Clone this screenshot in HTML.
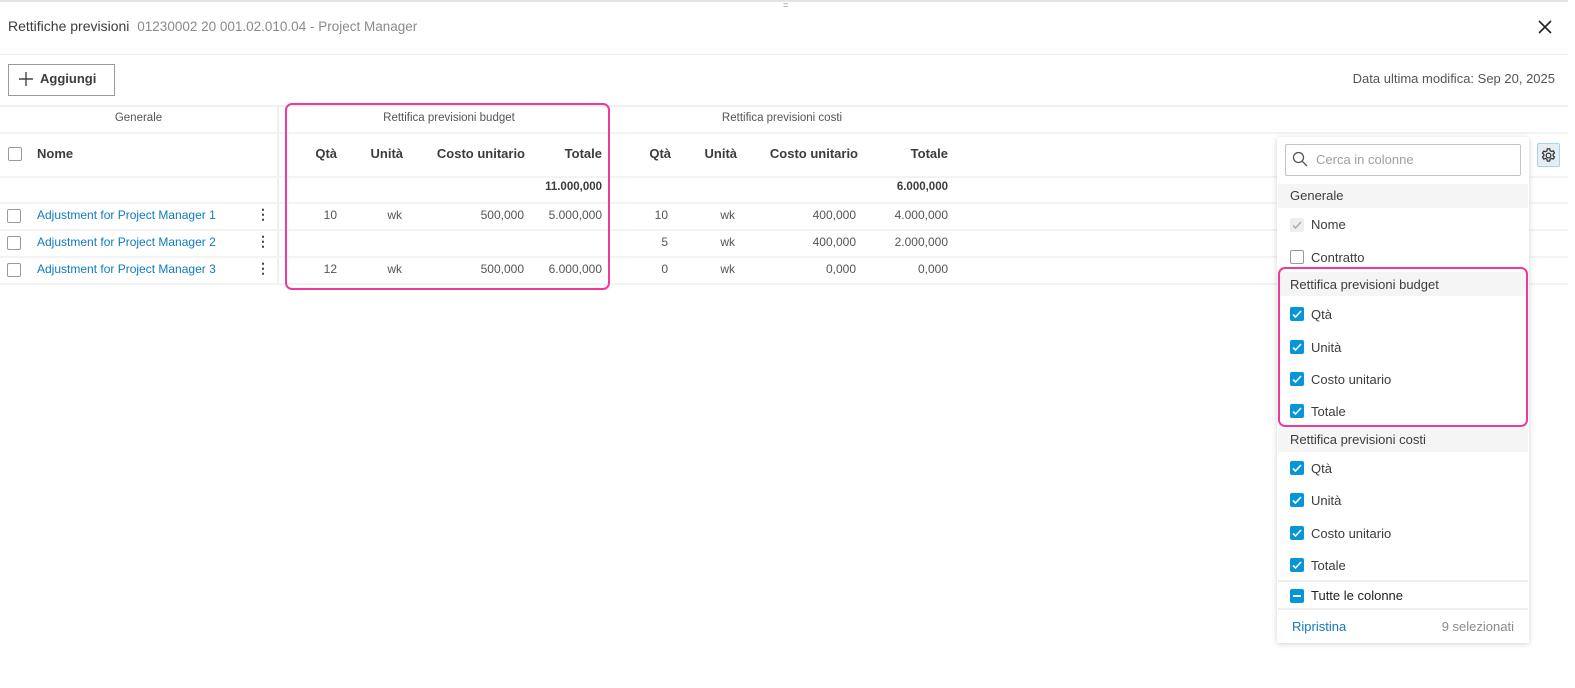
<!DOCTYPE html>
<html><head><meta charset="utf-8"><style>
*{box-sizing:border-box;margin:0;padding:0}
body{width:1575px;height:688px;background:#fff;font-family:"Liberation Sans",sans-serif;color:#3c3c3c;position:relative;overflow:hidden}
.a{position:absolute;white-space:nowrap}
.hl{position:absolute;left:0;width:1568px;height:1px;background:#eeeeee}
.r{text-align:right}
.cb{position:absolute;width:14px;height:14px;border:1px solid #9a9a9a;border-radius:2px;background:#fff}
.bc{position:absolute;width:14px;height:14px;border-radius:2px;background:#0696d7}
.bc svg{position:absolute;left:0;top:0}
.lnk{color:#0f7ac0;font-size:12px}
.num{font-size:12px;color:#555}
.hd{font-size:13px;font-weight:bold;color:#3c3c3c}
.gh{font-size:11.5px;color:#555}
.pi{font-size:13px;color:#3c3c3c}
</style></head><body>
<div class="a" style="left:0;top:0;width:1568px;height:2px;background:#e4e4e4"></div>
<div class="a" style="left:783px;top:0;font-size:9px;color:#888">=</div>
<div class="a" style="left:8px;top:18px;font-size:14px;color:#3c3c3c">Rettifiche previsioni <span style="color:#8a8a8a;margin-left:4px;font-size:13.5px">01230002 20 001.02.010.04 - Project Manager</span></div>
<svg class="a" style="left:1538px;top:20px" width="14" height="14" viewBox="0 0 14 14"><path d="M1 1L13 13M13 1L1 13" stroke="#222" stroke-width="1.6"/></svg>
<div class="hl" style="top:54px"></div>
<div class="a" style="left:8px;top:64px;width:107px;height:32px;border:1px solid #9a9a9a;background:#fff"></div>
<svg class="a" style="left:18px;top:71px" width="16" height="16" viewBox="0 0 16 16"><path d="M8 1V15M1 8H15" stroke="#444" stroke-width="1.4"/></svg>
<div class="a" style="left:40px;top:71px;font-size:13px;font-weight:bold;color:#3c3c3c">Aggiungi</div>
<div class="a r" style="right:20px;top:71px;font-size:13px;color:#555">Data ultima modifica: Sep 20, 2025</div>
<div class="hl" style="top:105px;height:2px;background:#f0f0f0"></div>
<div class="a" style="left:277px;top:105px;width:2px;height:180px;background:#efefef"></div>
<div class="a gh" style="left:0;width:277px;text-align:center;top:112px">Generale</div>
<div class="a gh" style="left:279px;width:340px;text-align:center;top:112px">Rettifica previsioni budget</div>
<div class="a gh" style="left:612px;width:340px;text-align:center;top:112px">Rettifica previsioni costi</div>
<div class="hl" style="top:132px;height:2px;background:#f3f3f3"></div>
<div class="cb" style="left:8px;top:147px"></div>
<div class="a hd" style="left:37px;top:146px">Nome</div>
<div class="a hd r" style="right:1238px;top:146px">Qtà</div>
<div class="a hd r" style="right:1172px;top:146px">Unità</div>
<div class="a hd r" style="right:1050px;top:146px">Costo unitario</div>
<div class="a hd r" style="right:973px;top:146px">Totale</div>
<div class="a hd r" style="right:904px;top:146px">Qtà</div>
<div class="a hd r" style="right:838px;top:146px">Unità</div>
<div class="a hd r" style="right:717px;top:146px">Costo unitario</div>
<div class="a hd r" style="right:627px;top:146px">Totale</div>
<div class="hl" style="top:176px;height:2px;background:#f3f3f3"></div>
<div class="a r" style="right:973px;top:181px;font-size:11.5px;font-weight:bold;color:#3c3c3c">11.000,000</div>
<div class="a r" style="right:627px;top:181px;font-size:11.5px;font-weight:bold;color:#3c3c3c">6.000,000</div>
<div class="hl" style="top:202px;height:2px;background:#f3f3f3"></div>
<div class="hl" style="top:229px;height:2px;background:#f3f3f3"></div>
<div class="hl" style="top:256px;height:2px;background:#f3f3f3"></div>
<div class="hl" style="top:283px;height:2px;background:#f3f3f3"></div>

<!-- row1 -->
<div class="cb" style="left:7px;top:209px"></div>
<div class="a lnk" style="left:37px;top:208px">Adjustment for Project Manager 1</div>
<div class="a" style="left:256px;top:207px;font-size:14px;font-weight:bold;color:#444;line-height:14px">⋮</div>
<div class="a num r" style="right:1238px;top:208px">10</div>
<div class="a num r" style="right:1173px;top:208px">wk</div>
<div class="a num r" style="right:1051px;top:208px">500,000</div>
<div class="a num r" style="right:973px;top:208px">5.000,000</div>
<div class="a num r" style="right:907px;top:208px">10</div>
<div class="a num r" style="right:840px;top:208px">wk</div>
<div class="a num r" style="right:719px;top:208px">400,000</div>
<div class="a num r" style="right:627px;top:208px">4.000,000</div>
<!-- row2 -->
<div class="cb" style="left:7px;top:236px"></div>
<div class="a lnk" style="left:37px;top:235px">Adjustment for Project Manager 2</div>
<div class="a" style="left:256px;top:234px;font-size:14px;font-weight:bold;color:#444;line-height:14px">⋮</div>
<div class="a num r" style="right:907px;top:235px">5</div>
<div class="a num r" style="right:840px;top:235px">wk</div>
<div class="a num r" style="right:719px;top:235px">400,000</div>
<div class="a num r" style="right:627px;top:235px">2.000,000</div>
<!-- row3 -->
<div class="cb" style="left:7px;top:263px"></div>
<div class="a lnk" style="left:37px;top:262px">Adjustment for Project Manager 3</div>
<div class="a" style="left:256px;top:261px;font-size:14px;font-weight:bold;color:#444;line-height:14px">⋮</div>
<div class="a num r" style="right:1238px;top:262px">12</div>
<div class="a num r" style="right:1173px;top:262px">wk</div>
<div class="a num r" style="right:1051px;top:262px">500,000</div>
<div class="a num r" style="right:973px;top:262px">6.000,000</div>
<div class="a num r" style="right:907px;top:262px">0</div>
<div class="a num r" style="right:840px;top:262px">wk</div>
<div class="a num r" style="right:719px;top:262px">0,000</div>
<div class="a num r" style="right:627px;top:262px">0,000</div>

<div class="a" style="left:285px;top:103px;width:325px;height:187px;border:2px solid #f0399a;border-radius:7px"></div>

<!-- gear -->
<div class="a" style="left:1537px;top:143px;width:23px;height:24px;background:#e6eef4;border:1px solid #a9d3ee;border-radius:2px"></div>
<svg class="a" style="left:1540px;top:147px" width="17" height="17" viewBox="0 0 24 24"><path d="M10 2h4l.6 2.8 2 1 2.6-1.3 2.8 2.8-1.3 2.6 1 2 2.8.6v4l-2.8.6-1 2 1.3 2.6-2.8 2.8-2.6-1.3-2 1L14 22h-4l-.6-2.8-2-1-2.6 1.3L2 16.7l1.3-2.6-1-2L-.5 11.5v0L2.3 11 2 10l-.3-.1.6-2.8 1-2L2 2.5" fill="none" stroke="none"/><circle cx="12" cy="12" r="3.3" fill="none" stroke="#333" stroke-width="1.8"/><path d="M10.3 2.5h3.4l.5 2.6 2.1 1.2 2.5-.9 1.7 2.9-2 1.7v2.4l2 1.7-1.7 2.9-2.5-.9-2.1 1.2-.5 2.6h-3.4l-.5-2.6-2.1-1.2-2.5.9-1.7-2.9 2-1.7V10.4l-2-1.7 1.7-2.9 2.5.9 2.1-1.2z" fill="none" stroke="#333" stroke-width="1.8" stroke-linejoin="round"/></svg>

<!-- panel -->
<div class="a" style="left:1277px;top:137px;width:252px;height:506px;background:#fff;box-shadow:0 1px 6px rgba(0,0,0,.18);border-radius:2px"></div>
<div class="a" style="left:1285px;top:144px;width:236px;height:32px;border:1px solid #c4c4c4;border-radius:2px"></div>
<svg class="a" style="left:1292px;top:151px" width="16" height="16" viewBox="0 0 16 16"><circle cx="6.5" cy="6.5" r="5" fill="none" stroke="#555" stroke-width="1.3"/><path d="M10.2 10.2L15 15" stroke="#555" stroke-width="1.3"/></svg>
<div class="a" style="left:1316px;top:152px;font-size:13px;color:#a0a0a0">Cerca in colonne</div>
<div class="a" style="left:1278px;top:184px;width:250px;height:24px;background:#f5f5f5"></div>
<div class="a pi" style="left:1290px;top:188px">Generale</div>
<div class="a" style="left:1290px;top:218px;width:14px;height:14px;background:#eee;border-radius:2px"></div>
<svg class="a" style="left:1290px;top:218px" width="14" height="14" viewBox="0 0 14 14"><path d="M3 7.5l2.5 2.5 5.5-6" fill="none" stroke="#a8a8a8" stroke-width="1.3"/></svg>
<div class="a pi" style="left:1311px;top:217px">Nome</div>
<div class="cb" style="left:1290px;top:250px"></div>
<div class="a pi" style="left:1311px;top:250px">Contratto</div>
<div class="a" style="left:1278px;top:272px;width:250px;height:24px;background:#f5f5f5"></div>
<div class="a pi" style="left:1290px;top:277px">Rettifica previsioni budget</div>
<div class="a" style="left:1278px;top:428px;width:250px;height:24px;background:#f5f5f5"></div>
<div class="a pi" style="left:1290px;top:432px">Rettifica previsioni costi</div>

<div class="bc" style="left:1290px;top:307px"><svg width="14" height="14" viewBox="0 0 14 14"><path d="M3 7.5l2.5 2.5 5.5-6" fill="none" stroke="#fff" stroke-width="1.6"/></svg></div><div class="a pi" style="left:1311px;top:307px">Qtà</div>
<div class="bc" style="left:1290px;top:340px"><svg width="14" height="14" viewBox="0 0 14 14"><path d="M3 7.5l2.5 2.5 5.5-6" fill="none" stroke="#fff" stroke-width="1.6"/></svg></div><div class="a pi" style="left:1311px;top:340px">Unità</div>
<div class="bc" style="left:1290px;top:372px"><svg width="14" height="14" viewBox="0 0 14 14"><path d="M3 7.5l2.5 2.5 5.5-6" fill="none" stroke="#fff" stroke-width="1.6"/></svg></div><div class="a pi" style="left:1311px;top:372px">Costo unitario</div>
<div class="bc" style="left:1290px;top:404px"><svg width="14" height="14" viewBox="0 0 14 14"><path d="M3 7.5l2.5 2.5 5.5-6" fill="none" stroke="#fff" stroke-width="1.6"/></svg></div><div class="a pi" style="left:1311px;top:404px">Totale</div>

<div class="bc" style="left:1290px;top:461px"><svg width="14" height="14" viewBox="0 0 14 14"><path d="M3 7.5l2.5 2.5 5.5-6" fill="none" stroke="#fff" stroke-width="1.6"/></svg></div><div class="a pi" style="left:1311px;top:461px">Qtà</div>
<div class="bc" style="left:1290px;top:493px"><svg width="14" height="14" viewBox="0 0 14 14"><path d="M3 7.5l2.5 2.5 5.5-6" fill="none" stroke="#fff" stroke-width="1.6"/></svg></div><div class="a pi" style="left:1311px;top:493px">Unità</div>
<div class="bc" style="left:1290px;top:526px"><svg width="14" height="14" viewBox="0 0 14 14"><path d="M3 7.5l2.5 2.5 5.5-6" fill="none" stroke="#fff" stroke-width="1.6"/></svg></div><div class="a pi" style="left:1311px;top:526px">Costo unitario</div>
<div class="bc" style="left:1290px;top:558px"><svg width="14" height="14" viewBox="0 0 14 14"><path d="M3 7.5l2.5 2.5 5.5-6" fill="none" stroke="#fff" stroke-width="1.6"/></svg></div><div class="a pi" style="left:1311px;top:558px">Totale</div>

<div class="a" style="left:1278px;top:580px;width:250px;height:2px;background:#eeeeee"></div>
<div class="bc" style="left:1290px;top:589px"><svg width="14" height="14" viewBox="0 0 14 14"><path d="M3 7H11" stroke="#fff" stroke-width="1.8"/></svg></div><div class="a" style="left:1311px;top:588px;font-size:13px;color:#222">Tutte le colonne</div>
<div class="a" style="left:1278px;top:608px;width:250px;height:2px;background:#eeeeee"></div>
<div class="a" style="left:1292px;top:619px;font-size:13px;color:#0f7ac0">Ripristina</div>
<div class="a r" style="right:61px;top:619px;font-size:13px;color:#8a8a8a">9 selezionati</div>

<div class="a" style="left:1278px;top:267px;width:250px;height:160px;border:2px solid #f0399a;border-radius:7px"></div>
</body></html>
